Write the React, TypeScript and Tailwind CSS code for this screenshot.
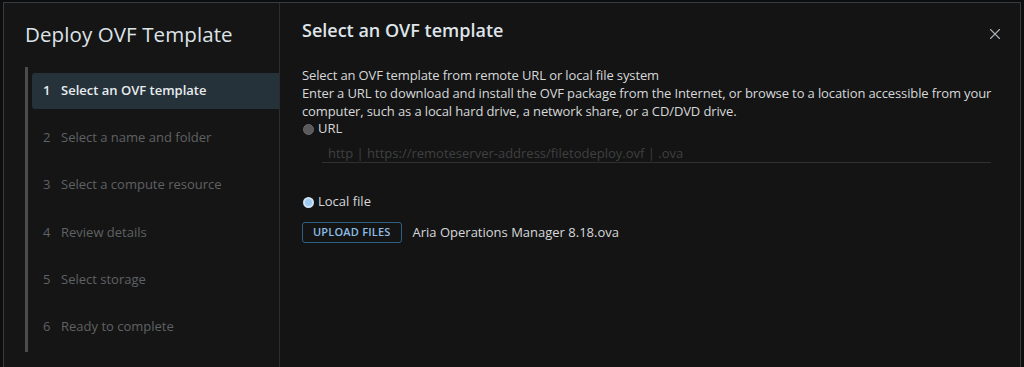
import { X } from 'lucide-react';

const steps = [
  'Select an OVF template',
  'Select a name and folder',
  'Select a compute resource',
  'Review details',
  'Select storage',
  'Ready to complete',
];

export default function App() {
  return (
    <div
      className="w-[1024px] h-[367px] bg-[#0c0d0f] overflow-hidden pt-[2px] pl-[3px] pr-[3px]"
      style={{ fontFamily: '"Open Sans", "Liberation Sans", sans-serif' }}
    >
      <div className="flex h-[400px] border-t border-l border-r border-[#3a3b3d] bg-[#141414]">
        {/* wizard steps */}
        <div className="w-[276px] shrink-0 border-r border-[#2c2c2c] bg-[#151515] pl-[21px]">
          <h1 className="mt-[17px] text-[20.5px] leading-[28px] text-[#dde3e7] tracking-[0.1px]">
            Deploy OVF Template
          </h1>
          <div className="mt-[19px] border-l-[3px] border-[#4c4c4c] h-[285px] pl-[4px]">
            {steps.map((s, i) => (
              <div key={s} className="h-[47.25px] flex items-center">
                <div
                  className={
                    i === 0
                      ? 'h-[36px] w-full flex items-center pl-[11px] rounded-l-[3px] bg-[#26323a] text-[#e8ecef] font-semibold'
                      : 'h-[36px] w-full flex items-center pl-[11px] text-[#5f6163]'
                  }
                >
                  <span className="w-[18px] text-[13px]">{i + 1}</span>
                  <span className="text-[13px]">{s}</span>
                </div>
              </div>
            ))}
          </div>
        </div>

        {/* content */}
        <div className="flex-1 pl-[22px] pr-[20px]">
          <div className="flex items-center justify-between h-[28px] mt-[13px]">
            <h2 className="text-[18px] font-semibold text-[#dfe5e9]">Select an OVF template</h2>
            <X size={18} strokeWidth={1.5} className="text-[#a9b0b5] mt-[7px] -mr-[4px]" />
          </div>
          <div className="mt-[22px] text-[13px] leading-[18px] text-[#d6d8da] tracking-[-0.12px]">
            <p>Select an OVF template from remote URL or local file system</p>
            <p>
              Enter a URL to download and install the OVF package from the Internet, or browse to a location
              accessible from your computer, such as a local hard drive, a network share, or a CD/DVD drive.
            </p>
          </div>
          <label className="flex items-center gap-[4px] h-[18px] text-[13px] text-[#d6d8da]">
            <span className="w-[11px] h-[11px] rounded-full bg-[#5a5a5a] border border-[#6a6a6a] ml-[1px]" />
            URL
          </label>
          <div className="ml-[20px] mr-[9px] mt-[7px] h-[18px] border-b border-[#303030] flex items-center pl-[6px] text-[13px] text-[#3f4041]">
            http | https://remoteserver-address/filetodeploy.ovf | .ova
          </div>
          <label className="flex items-center gap-[4px] h-[18px] mt-[30px] text-[13px] text-[#d6d8da]">
            <span className="w-[11px] h-[11px] rounded-full bg-[#9ccaf0] border-[2px] border-[#cfe4f5] ml-[1px]" />
            Local file
          </label>
          <div className="flex items-center mt-[11px]">
            <button className="h-[21px] px-[10px] rounded-[3px] border border-[#2f5f82] text-[11px] font-semibold text-[#8dbde4] tracking-[0.2px]">
              UPLOAD FILES
            </button>
            <span className="ml-[11px] text-[13px] text-[#d6d8da]">Aria Operations Manager 8.18.ova</span>
          </div>
        </div>
      </div>
    </div>
  );
}
